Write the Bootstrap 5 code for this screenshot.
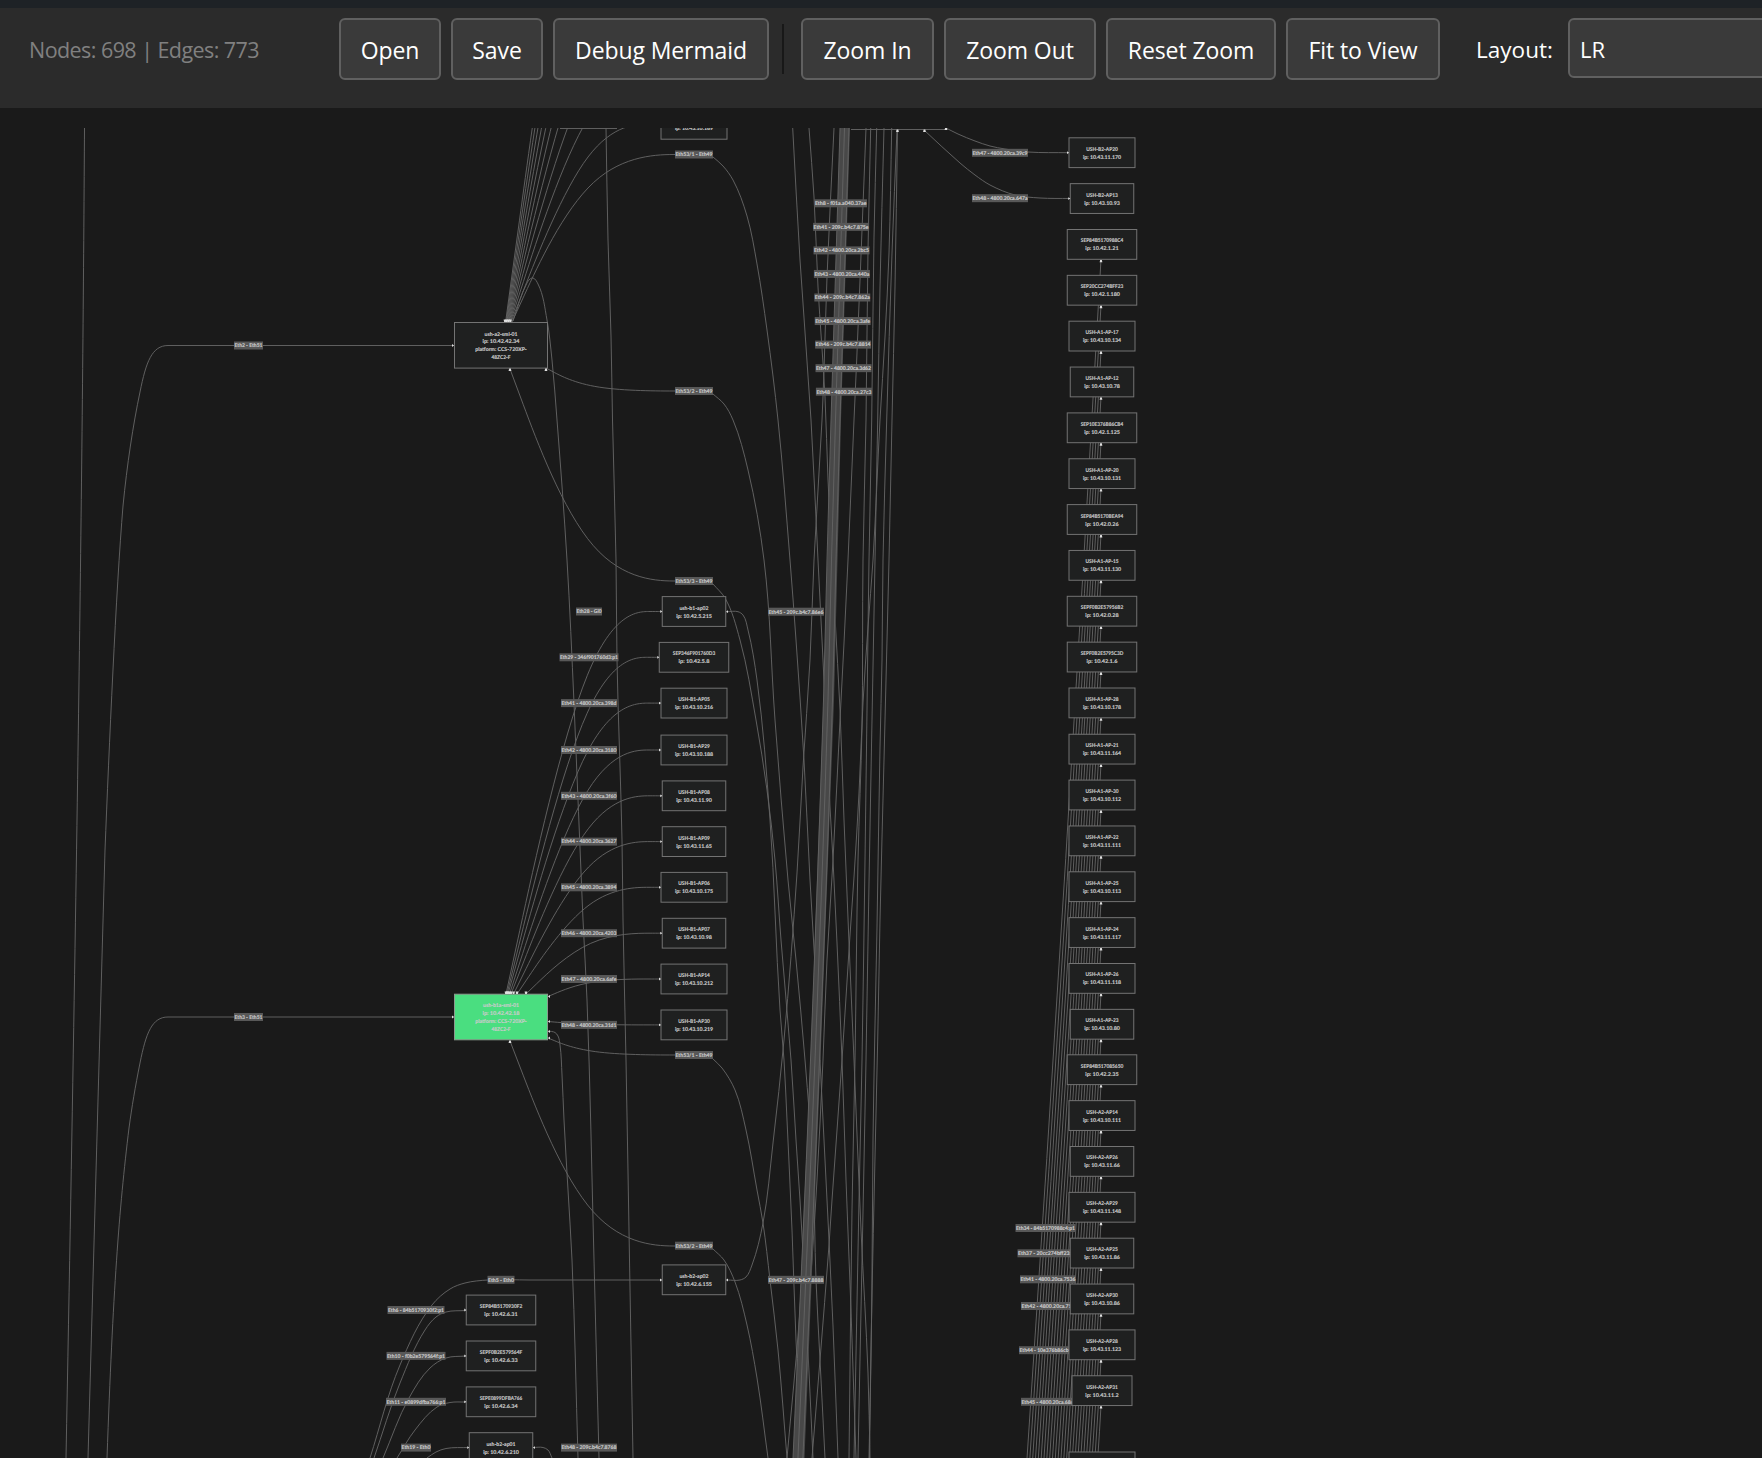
<!DOCTYPE html>
<html lang="en" data-bs-theme="dark">
<head>
<meta charset="utf-8">
<meta name="viewport" content="width=device-width, initial-scale=1">
<title>Network Map Viewer</title>
<link href="https://cdn.jsdelivr.net/npm/bootstrap@5.3.0/dist/css/bootstrap.min.css" rel="stylesheet">
<style>
body{background:#1a1a1a;font-family:"Open Sans","Noto Sans",sans-serif;font-size:23px;width:1762px;height:1458px}
.strip{height:8px;background:#1e2226}
.toolbar{height:100px;background:#2b2b2b;padding:10px 0 0 29px;color:#fff}
.stats{width:310px;height:62px;padding-top:2px;color:#808080;font-size:21.5px;letter-spacing:-.56px}
.tool-group{gap:10px}
.tool{height:62px;background:#3a3a3a;border:2px solid #606060;border-radius:6px;color:#fff;font-size:23px;letter-spacing:-.1px;padding:2px 0 0;line-height:1;white-space:nowrap}
.tool:hover{background:#484848;color:#fff;border-color:#777}
.w-open{width:102px}.w-save{width:92px}.w-debug{width:216px}.w-in{width:133px}.w-out{width:152px}.w-reset{width:170px}.w-fit{width:154px}
.divider{width:2px;height:50px;background:#181818;margin:0 7px 0 3px}
.layout-label{width:77px;height:62px;padding-top:2px;margin:0 15px 0 36px;font-size:22.5px}
.layout-pick{width:260px;height:60px;background:#3a3a3a;border:2px solid #606060;border-radius:6px;padding:2px 10px 0;font-size:22px}
.canvas{height:1330px;margin-top:20px;overflow:hidden}
.canvas svg{display:block}
.edge{fill:none;stroke:#636363;stroke-width:.95}
.nbox{fill:#1f2020;stroke:#737373;stroke-width:1}
.nbox.on{fill:#4ade80;stroke:#8a9a8e}
.tag{fill:#585858}
svg text{font:700 5.3px Lato,"Open Sans",sans-serif;fill:#ccc;stroke:#ccc;stroke-width:.12;text-anchor:middle;text-rendering:geometricPrecision}
.tip{fill:#e0e0e0}
</style>
<script src="https://cdn.jsdelivr.net/npm/bootstrap@5.3.0/dist/js/bootstrap.bundle.min.js"></script>
</head>
<body class="m-0 overflow-hidden">
<div class="strip"></div>
<header class="toolbar d-flex align-items-start overflow-hidden">
  <div class="stats d-flex align-items-center flex-shrink-0"><span>Nodes: 698 | Edges: 773</span></div>
  <div class="tool-group d-flex flex-shrink-0">
    <button class="btn tool w-open">Open</button>
    <button class="btn tool w-save">Save</button>
    <button class="btn tool w-debug">Debug Mermaid</button>
    <div class="divider align-self-center"></div>
    <button class="btn tool w-in">Zoom In</button>
    <button class="btn tool w-out">Zoom Out</button>
    <button class="btn tool w-reset">Reset Zoom</button>
    <button class="btn tool w-fit">Fit to View</button>
  </div>
  <div class="layout-label d-flex align-items-center justify-content-center flex-shrink-0"><span>Layout:</span></div>
  <div class="layout-pick d-flex align-items-center flex-shrink-0">LR</div>
</header>
<main class="canvas"><svg id="map" width="1762" height="1330" viewBox="0 128 1762 1330"></svg></main>
<script>
const out = {edges:'', tags:'', nodes:'', tips:''};
// B-spline through three layout points, as the graph renderer draws it
function basis(p){
  const q=[...p, p[p.length-1]];
  const f=(a,b,u,v)=>[(a[0]*u+b[0]*v)/(u+v),(a[1]*u+b[1]*v)/(u+v)];
  let d=`M${p[0]}L${f(p[0],p[1],5,1)}`;
  for(let i=1;i<q.length;i++){
    const a=q[i-1],b=q[i],c=q[i+1]||b;
    d+=`C${f(a,b,2,1)} ${f(a,b,1,2)} ${[(a[0]+4*b[0]+c[0])/6,(a[1]+4*b[1]+c[1])/6]}`;
  }
  return d+`L${p[p.length-1]}`;
}
// interpolating curve; chord tangents are scaled to each segment's own length
function smooth(p){
  const n=p.length, len=(a,b)=>Math.hypot(b[0]-a[0],b[1]-a[1]);
  const tan=p.map((b,i)=>{
    const a=p[i-1]||b,c=p[i+1]||b;
    const l1=len(a,b)||1,l2=len(b,c)||1;
    const x=(b[0]-a[0])/l1+(c[0]-b[0])/l2, y=(b[1]-a[1])/l1+(c[1]-b[1])/l2, m=Math.hypot(x,y);
    return [x/m,y/m];
  });
  let d=`M${p[0]}`;
  for(let i=0;i<n-1;i++){
    const b=p[i],c=p[i+1],l=len(b,c)/3;
    d+=`C${b[0]+tan[i][0]*l},${b[1]+tan[i][1]*l} ${c[0]-tan[i+1][0]*l},${c[1]-tan[i+1][1]*l} ${c}`;
  }
  return d;
}
const edge=d=>out.edges+=`<path class="edge" d="${d}"/>`;
const parse=s=>s.trim().split(/\s+/).map(v=>v.split(',').map(Number));
const tip=(x,y,dir)=>{
  const s=1.4,m={r:[[-2,-s],[0,0],[-2,s]],l:[[2,-s],[0,0],[2,s]],u:[[-s,2.4],[-.8,0],[.8,0],[s,2.4]],d:[[-s,-2.4],[s,-2.4],[.8,0],[-.8,0]]}[dir];
  out.tips+=`<polygon class="tip" points="${m.map(v=>[x+v[0],y+v[1]]).join(' ')}"/>`;
};
const txt=(s,x,y,l)=>`<text x="${x}" y="${y+1.8}" textLength="${l}" lengthAdjust="spacingAndGlyphs">${s}</text>`;
function tag(s,x,y,w){
  out.tags+=`<rect class="tag" x="${x-w/2}" y="${y-4}" width="${w}" height="8"/>`+txt(s,x,y,w-1);
}
function node(name,ip,x,y,w){
  out.nodes+=`<rect class="nbox" x="${x-w/2}" y="${y-14.9}" width="${w}" height="29.8"/>`+
    (name?txt(name,x,y-3.8,name.startsWith('SEP')?42.5:name.startsWith('ush')?29:name.length>11?33:31.5):'')+txt('ip: '+ip,x,y+4.2,(ip.length+4)*2.38);
}
function sw(lines,x,y,cls){
  out.nodes+=`<rect class="nbox ${cls}" x="${x-46.5}" y="${y-22.8}" width="93" height="45.6"/>`;
  lines.forEach((t,i)=>out.nodes+=txt(t,x,y-11.6+i*7.9,[i==0&&cls?36:33,37,51.5,19][i]));
}

// left feeders
edge('M84.5,128C83,380 80,720 66,1458');
edge('M454,345.5H168C152,345.5 146,362 140,392C133,425 127,465 123,506C116,590 109,750 105,850L88,1458');
edge('M454,1017H168C152,1017 146,1033 140,1063C135,1088 132,1106 129,1128C119,1210 113,1290 107,1458');

// hand-routed trunk edges
[
'513,321 527,283 530,279 533,278 538,284 547,320 552,360 557,420 567,560 574,703 583,920 587,1000 594,1260 599,1458',
'606,128 608,240 611,336 612.5,420 616,560 617,660 622,840 623,920 626,1060 629.5,1260 633,1458',
'548,1031 555,1032.5 558,1036 560,1045 562,1075 564,1120 568,1190 572,1260 578,1458',
'713,157 723,166 733,180 747,216 757,264 767,330 778,420 790,560 796,640 804,760 810,880 817,1000 820,1060 825,1160 829,1240 833,1326 838,1458',
'713,394 724,404 733,420 748,470 764,560 775,720 788,880 796,960 805,1060 813,1170 816,1280 820,1360 825,1458',
'713,584 725,598 740,640 756,720 767,790 775,860 781,940 791,1060 796,1140 800,1200 806,1310 813,1458',
'727,611.7 738,611.7 743,615 748,630 757,680 770,820 780,1010 784,1060 787,1120 792,1230 796,1340 802,1458',
'713,1059 722,1068 735,1090 746,1130 757,1190 763,1223 770,1280 778,1350 787,1458',
'713,1249 724,1260 735,1282 747,1325 757,1378 768,1458',
'727,1280 740,1280 746,1277 752,1265 763,1223 773,1143 784,1040 797,873 803,767 810,660 814,560 822,420 824,370 827,277 834,128',
'792.7,128 800,260 811,420 818,560 823,660 830,807 833,860 837,943 842,1060 846,1180 851,1310 856,1458',
'809,128 814,197 818,287 825,397 828,480 832,560 835,617 840,710 844,820 849,943 854,1060 861,1230 868,1373 870,1458',
'866,128 864,180 856.7,360 854,420 848,560 844,643 840,720 833,860 827,960 823,1060 817,1180 812,1260 804,1370 799,1458',
'870.7,128 868,250 866,420 863,560 862,727 858,860 855,1060 852,1210 849,1458',
'876.7,128 874,237 871.7,420 869,560 867,710 865,860 862,1060 859,1200 854,1458',
'884,128 880,287 877.7,420 875,560 873,667 871,773 869,883 866,1060 861,1310 858,1458',
'891.7,128 889,253 885,337 880,420 873,560 868,627 863,703 859,793 854,877 849,950 842,1060 832,1200 829,1245 820,1360 812,1458',
'897,130 892,253 886.7,420 883,560 882,660 880,747 877,927 874.7,1040 873,1140 871.7,1310 869,1458',
'897.5,130 895,287 892,420 889,560 884,760 880,920 877.7,1040 875,1157 871.7,1310 869.5,1458',
'820,1060 807,1180 800,1310 787,1458',
'946,128 958,134 975,141 990,146 1005,149 1028,152 1069,152.7',
'924,130 960,163 975,175 990,185 1015,195 1040,198 1070,198.5',
'370,1458 400,1365 432,1305 450,1289 465,1283 488,1280 530,1280 662,1280',
'374,1458 400,1383 425,1330 436,1317 446,1312 466,1310.5',
'383,1458 409,1398 430,1368 446,1358 466,1356',
'397,1458 415,1430 437,1407 450,1402.5 466,1402',
'427,1458 436,1452 446,1448.5 469,1447.5',
'533,1447.5 543,1447.5 548,1450 552,1458'
].forEach(s=>edge(smooth(parse(s))));
edge('M560,128.5H617');edge('M851,129.5H947');

// dense uplink bundle
out.edges+='<path fill="#484848" d="M840,128L831,420L823.5,700L810.5,1060L793,1458H804.5L820.5,1060L834,700L841,420L850,128Z"/>';
for(const t of [0,4.5,9])edge(smooth([[840+t,128],[831+t,420],[827+t,560],[823.5+t,700],[810.5+t,1060],[793+t*1.1,1458]]));

// first access switch
for(let k=0;k<10;k++){const y=124-k*45.9;edge(basis([[511-k*.6,322],[589,y],[661,y]]));}
edge(basis([[512,322],[589,154.5],[694,154.5]]));
edge(basis([[546,368],[589,391],[694,391]]));
edge(basis([[510,369],[589,581],[694,581]]));
for(let x=505;x<=512;x+=1.8)tip(x,322,'d');
tip(454,345.5,'r');tip(546,368.5,'u');tip(510,368.5,'u');
sw(['ush-a2-sml-01','ip: 10.42.42.34','platform: CCS-720XP-','48ZC2-F'],501,345.3,'');
tag('Eth2 - Eth51',248.5,345.5,29);
tag('Eth53/1 - Eth49',694,154.5,38);tag('Eth53/2 - Eth49',694,391,38);tag('Eth53/3 - Eth49',694,581,38);

// selected access switch
const mid=[
['ush-b1-ap02','10.42.5.215',611.5,63.5,'Eth28 - Gi0',26,506],
['SEP346F901760D3','10.42.5.8',657.3,69.5,'Eth29 - 346f901760d3:p1',59,507],
['USH-B1-AP05','10.43.10.216',703.1,66,'Eth41 - 4800.20ca.398d',56,508],
['USH-B1-AP29','10.43.10.188',750,66,'Eth42 - 4800.20ca.3180',56,509.5],
['USH-B1-AP08','10.43.11.90',795.8,63.5,'Eth43 - 4800.20ca.3f60',56,511],
['USH-B1-AP09','10.43.11.65',841.6,63.5,'Eth44 - 4800.20ca.3627',56,513.5],
['USH-B1-AP06','10.43.10.175',887.3,66,'Eth45 - 4800.20ca.3894',56,517],
['USH-B1-AP07','10.43.10.98',933.2,63.5,'Eth46 - 4800.20ca.4203',56,526],
['USH-B1-AP14','10.43.10.212',979,66,'Eth47 - 4800.20ca.6afe',56,548,996.5],
['USH-B1-AP30','10.43.10.219',1024.9,66,'Eth48 - 4800.20ca.31d1',56,548,1021.5]];
mid.forEach(([n,ip,y,w,l,lw,sx,sy])=>{
  edge(basis([[sx,sy||994],[589,y],[694-w/2,y]]));
  node(n,ip,694,y,w);tag(l,589,y,lw);tip(694-w/2,y,'r');tip(sx,sy||994,sy?'l':'d');
});
tip(548,1031.5,'l');tip(548,1038,'l');tip(510,1040.5,'u');tip(454,1017,'r');tip(726,611.7,'l');tip(726,1280,'l');
edge(basis([[548,1038],[589,1055],[694,1055]]));
edge(basis([[510,1041],[589,1246],[694,1246]]));
sw(['ush-b1a-sml-01','ip: 10.42.42.18','platform: CCS-720XP-','48ZC2-F'],501,1017,'on');
tag('Eth3 - Eth51',248.5,1017,29);
tag('Eth53/1 - Eth49',694,1055,38);tag('Eth53/2 - Eth49',694,1245.7,38);
tag('Eth45 - 209c.b4c7.86e6',796,611.7,56);tag('Eth47 - 209c.b4c7.8888',796,1279.8,56);
node('','10.43.10.169',694,124.3,66);
node('ush-b2-ap02','10.42.6.155',694,1279.8,63.5);tip(662,1280,'r');

// lower-left group
tag('Eth5 - Eth0',501,1279.8,27);
[['SEP84B5170930F2','10.42.6.31',1310,69.5,'Eth6 - 84b5170930f2:p1',57],
['SEPF0B2E579564F','10.42.6.33',1355.9,69.5,'Eth10 - f0b2e579564f:p1',59],
['SEPE0899DFBA766','10.42.6.34',1401.8,69.5,'Eth11 - e0899dfba766:p1',60],
['ush-b2-ap01','10.42.6.210',1447.6,63.5,'Eth19 - Eth0',30]].forEach(([n,ip,y,w,l,lw])=>{
  node(n,ip,501,y,w);tag(l,416,y,lw);tip(501-w/2,y,'r');});
tip(533,1447.6,'l');tag('Eth48 - 209c.b4c7.8768',589,1447.6,56);

// trunk labels
['Eth8 - f01a.a040.37ae','Eth41 - 209c.b4c7.875e','Eth42 - 4800.20ca.2bc5','Eth43 - 4800.20ca.440a','Eth44 - 209c.b4c7.862a','Eth45 - 4800.20ca.3afe','Eth46 - 209c.b4c7.8814','Eth47 - 4800.20ca.3d62','Eth48 - 4800.20ca.27c3']
 .forEach((l,i)=>tag(l,840.7+i*.4,203.3+i*23.55,i?56:52.5));
tip(897.5,129.5,'u');tip(924.5,129.5,'u');tip(946,127.5,'u');
tag('Eth47 - 4800.20ca.39c9',1000,152.8,56);tag('Eth48 - 4800.20ca.647a',1000,198.2,56);

// right-hand endpoint column
const right=[['USH-B2-AP20','10.43.11.170'],['USH-B2-AP13','10.43.10.93'],['SEP84B5170988C4','10.42.1.21'],['SEP20CC274BFF23','10.42.1.180'],['USH-A1-AP-17','10.43.10.134'],['USH-A1-AP-12','10.43.10.78'],['SEP10E376B86CB4','10.42.1.125'],['USH-A1-AP-20','10.43.10.131'],['SEP84B5170BEA94','10.42.0.26'],['USH-A1-AP-15','10.43.11.130'],['SEPF0B2E57956B2','10.42.0.28'],['SEPF0B2E5795C3D','10.42.1.6'],['USH-A1-AP-28','10.43.10.178'],['USH-A1-AP-21','10.43.11.164'],['USH-A1-AP-30','10.43.10.112'],['USH-A1-AP-22','10.43.11.111'],['USH-A1-AP-25','10.43.10.113'],['USH-A1-AP-24','10.43.11.117'],['USH-A1-AP-26','10.43.11.118'],['USH-A1-AP-23','10.43.10.80'],['SEP84B517085650','10.42.2.35'],['USH-A2-AP14','10.43.10.111'],['USH-A2-AP26','10.43.11.66'],['USH-A2-AP29','10.43.11.148'],['USH-A2-AP25','10.43.11.86'],['USH-A2-AP30','10.43.10.86'],['USH-A2-AP28','10.43.11.123'],['USH-A2-AP31','10.43.11.2']];
right.forEach(([n,ip],i)=>{
  const y=152.7+i*45.85+(i>12&&i<20?.4:0), w=n[0]=='S'?69.5:ip.length>11?66:ip.length>10?63.5:60;
  node(n,ip,1102,y,w);
  if(i<2)tip(1102-w/2,y,'r');
  else{const b=y+15,h=1458-b;edge(`M1101,${b}Q${1101-h*.028},${b+h/2} ${1101-h*.0617},1458`);tip(1101,b+.5,'u');}
});
out.nodes+='<rect class="nbox" x="1069" y="1452" width="66" height="30"/>';
[['Eth34 - 84b5170988c4:p1',1045.5,1228,60],['Eth37 - 20cc274bff23:p1',1047.5,1253.3,60],['Eth41 - 4800.20ca.7536',1048,1279.3,56],['Eth42 - 4800.20ca.71f2',1049,1306,56],['Eth44 - 10e376b86cb4:p1',1049,1350.2,60],['Eth45 - 4800.20ca.68e0',1049,1401.8,56]].forEach(a=>tag(...a));
document.getElementById('map').innerHTML=out.edges+out.tags+out.nodes+out.tips;
</script>
</body>
</html>
